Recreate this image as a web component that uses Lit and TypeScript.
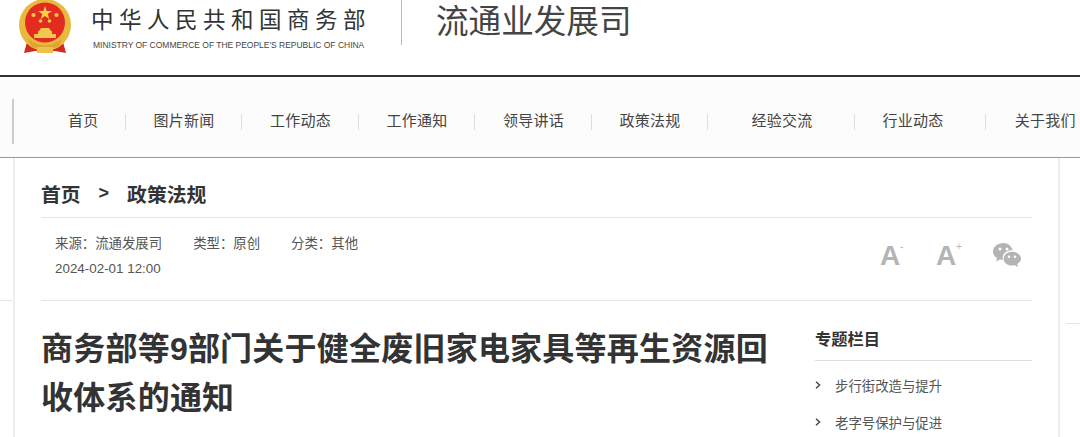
import { LitElement, html, css } from "lit";
import { customElement } from "lit/decorators.js";

const NAV = [
  ["首页", "a"], ["图片新闻", "b"], ["工作动态", "b"], ["工作通知", "b"], ["领导讲话", "b"],
  ["政策法规", "b"], ["经验交流", "w"], ["行业动态", "x"], ["关于我们", "y"],
];

@customElement("app-root")
export class AppRoot extends LitElement {
  static styles = css`
    :host { display: block; height: 437px; overflow: hidden; background: #fff; color: #333;
      font-family: "Liberation Sans", "Noto Sans CJK SC", sans-serif; }
    .head { height: 75px; display: flex; align-items: flex-start; box-sizing: border-box; padding-left: 18px; }
    .emblem { width: 54px; height: 56px; display: block; flex: none; }
    .brand { margin-left: 20px; padding-top: 6px; width: 290px; }
    .cn { font-size: 22.5px; line-height: 30px; letter-spacing: 5.5px; color: #333; white-space: nowrap; margin-left: -1px; }
    .en { font-size: 8.47px; line-height: 12px; margin-top: 3px; margin-left: 1px; color: #444; white-space: nowrap; }
    .sep { width: 1px; height: 45px; background: #bbb; margin-left: 19px; flex: none; }
    .dept { font-size: 32.6px; line-height: 44px; margin-left: 34px; color: #444; font-weight: 400; white-space: nowrap; }
    .nav { height: 83px; box-sizing: border-box; border-top: 2px solid #333; border-bottom: 1px solid #999;
      background: #fcfcfc; display: flex; align-items: flex-start; padding-left: 12px; }
    .nav-edge { width: 2px; height: 45px; margin-top: 22px; background: #ccc; flex: none; }
    .items { display: flex; margin-top: 37px; margin-left: 54px; white-space: nowrap; }
    .item { font-size: 15px; line-height: 14px; color: #444; letter-spacing: 0.25px; box-sizing: border-box; height: 16px;
      border-right: 1px solid #ddd; }
    .a { padding-right: 26px; }
    .b { padding: 0 26.5px 0 28px; }
    .w { padding: 0 41px 0 43.5px; }
    .x { padding: 0 41px 0 28px; }
    .y { padding-left: 29px; border-right: 0; }
    .body { display: flex; height: 279px; }
    .gutter-l { width: 13px; flex: none; }
    .gutter-l i, .gutter-r i { display: block; height: 1px; background: #e6e6e6; }
    .gutter-l i { margin-top: 142px; }
    .gutter-r { flex: 1; padding-top: 165px; padding-left: 6px; }
    .main { width: 1047px; flex: none; box-sizing: border-box; border-left: 2px solid #eee; border-right: 2px solid #eee;
      padding: 0 26px; }
    .crumb { height: 60px; box-sizing: border-box; border-bottom: 1px solid #e4e4e4; display: flex; align-items: center;
      font-size: 19.8px; font-weight: 700; color: #333; padding-top: 21px; padding-bottom: 10px; width: 991px; }
    .crumb .gt { margin: 0 18px; font-size: 18px; }
    .meta { height: 83px; box-sizing: border-box; border-bottom: 1px solid #e4e4e4; width: 991px;
      display: flex; justify-content: space-between; padding-left: 14px; }
    .info { padding-top: 13px; font-size: 13.4px; line-height: 25px; color: #555; }
    .info span { margin-right: 31px; }
    .tools { display: flex; gap: 24px; padding: 23px 10px 0 0; align-items: flex-start; }
    .tool { position: relative; width: 32px; height: 30px; font-size: 28px; line-height: 30px; font-weight: 700; color: #b4b4b4; }
    .tool sup { position: absolute; left: 20px; top: 1px; font-size: 10px; line-height: 10px; font-weight: 400; }
    .wx { display: block; width: 30px; height: 26px; margin-top: 1px; }
    .cols { display: flex; width: 991px; padding-top: 22px; }
    h1 { margin: 2px 34px 0 0; width: 740px; flex: none; font-size: 32px; line-height: 49px; font-weight: 700; color: #333; letter-spacing: 0.22px; }
    .side h2 { margin: 0; font-size: 16.25px; line-height: 33px; height: 37px; width: 217px; font-weight: 700; color: #333; border-bottom: 1px solid #e0e0e0; }
    .side ul { list-style: none; margin: 5px 0 0; padding: 0; }
    .side li { height: 37px; display: flex; align-items: center; font-size: 13.4px; color: #555; white-space: nowrap; }
    .chev { width: 6px; height: 8px; margin-right: 14px; flex: none; display: block; }
  `;

  render() {
    return html`
      <div class="head">
        <svg class="emblem" viewBox="0 0 54 56">
          <path d="M9 42 L6 53 L17 51 L37 51 L48 53 L45 42 Z" fill="#d42a1e"/>
          <circle cx="27" cy="25" r="26" fill="#e8b93e"/>
          <circle cx="27" cy="22.5" r="20" fill="#e32b20"/>
          <path d="M10 39 Q27 52 44 39 L41 46 Q27 53 13 46 Z" fill="#dca52f"/>
          <polygon points="27,6 28.7,11 34,11 29.7,14 31.3,19 27,16 22.7,19 24.3,14 20,11 25.3,11" fill="#f5d04a"/>
          <circle cx="15.5" cy="15" r="2.1" fill="#f2c94a"/><circle cx="38.5" cy="15" r="2.1" fill="#f2c94a"/>
          <circle cx="22.5" cy="21" r="1.8" fill="#f2c94a"/><circle cx="31.5" cy="21" r="1.8" fill="#f2c94a"/>
          <path d="M23 28 H31 L33 31 H21 Z M20 31 H34 V34 H20 Z M16 34 H38 V38 H16 Z" fill="#f0c850"/>
          <path d="M19 47 H35 V53 H19 Z" fill="#eec24a"/>
        </svg>
        <div class="brand">
          <div class="cn">中华人民共和国商务部</div>
          <div class="en">MINISTRY OF COMMERCE OF THE PEOPLE'S REPUBLIC OF CHINA</div>
        </div>
        <div class="sep"></div>
        <div class="dept">流通业发展司</div>
      </div>
      <div class="nav">
        <div class="nav-edge"></div>
        <div class="items">${NAV.map(([t, c]) => html`<div class="item ${c}">${t}</div>`)}</div>
      </div>
      <div class="body">
        <div class="gutter-l"><i></i></div>
        <div class="main">
          <div class="crumb"><span>首页</span><span class="gt">&gt;</span><span>政策法规</span></div>
          <div class="meta">
            <div class="info">
              <div><span>来源：流通发展司</span><span>类型：原创</span><span>分类：其他</span></div>
              <div>2024-02-01 12:00</div>
            </div>
            <div class="tools">
              <div class="tool">A<sup>-</sup></div>
              <div class="tool">A<sup>+</sup></div>
              <svg class="wx" viewBox="0 0 30 26">
                <path d="M11.5 1 C5.5 1 1 5 1 9.5 C1 12.3 2.6 14.6 5 16 L4 19.5 L8 17.4 C9 17.7 10 17.9 11 17.9 C10.6 16.8 10.5 15.9 10.7 14.8 C11.4 10.8 15.5 8 20.8 8.4 C19.6 4.2 15.8 1 11.5 1 Z" fill="#b4b4b4"/>
                <circle cx="8" cy="7" r="1.5" fill="#fff"/><circle cx="15" cy="7" r="1.5" fill="#fff"/>
                <path d="M20 9.8 C15.2 9.8 11.6 13 11.6 16.8 C11.6 20.6 15.2 23.6 20 23.6 C21 23.6 22 23.5 22.9 23.2 L26 25 L25.3 22 C27.6 20.6 29 18.8 29 16.8 C29 13 25 9.8 20 9.8 Z" fill="#b4b4b4"/>
                <circle cx="17" cy="14.8" r="1.3" fill="#fff"/><circle cx="23" cy="14.8" r="1.3" fill="#fff"/>
              </svg>
            </div>
          </div>
          <div class="cols">
            <h1>商务部等9部门关于健全废旧家电家具等再生资源回收体系的通知</h1>
            <div class="side">
              <h2>专题栏目</h2>
              <ul>
                ${["步行街改造与提升", "老字号保护与促进"].map((t) => html`<li>
                  <svg class="chev" viewBox="0 0 6 8"><path d="M1 0.8 L4.6 4 L1 7.2" fill="none" stroke="#444" stroke-width="1.4"/></svg>${t}</li>`)}
              </ul>
            </div>
          </div>
        </div>
        <div class="gutter-r"><i></i></div>
      </div>
    `;
  }
}
